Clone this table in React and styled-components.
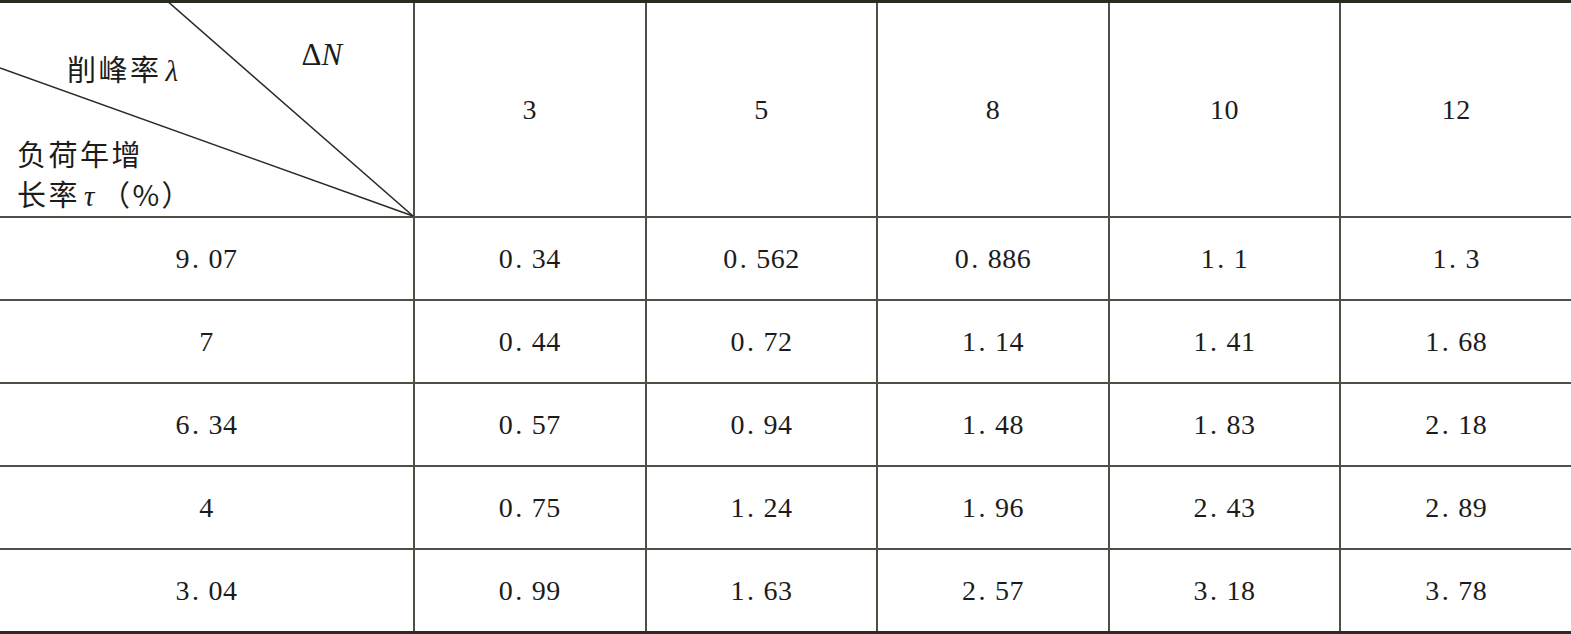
import React from "react";
import styled, { createGlobalStyle } from "styled-components";

const Global = createGlobalStyle`
  html, body { margin: 0; padding: 0; background: #ffffff; }
  body { font-family: "Liberation Serif", "Noto Sans CJK SC", serif; color: #1c1c1c; }
`;

const Table = styled.div`
  display: grid;
  grid-template-columns: 413px repeat(5, 1fr);
  grid-template-rows: 213px repeat(5, 81px);
  gap: 2px;
  width: 1571px;
  background: #4f4f46;
  border-top: 3px solid #2c2b1f;
  border-bottom: 3px solid #2c2b1f;
`;

const Cell = styled.div`
  background: #ffffff;
  display: flex;
  align-items: center;
  justify-content: center;
  font-family: "Liberation Serif", serif;
  font-size: 28px;
  color: #1c1c1c;
  letter-spacing: 0.5px;
`;

const Dot = styled.span`
  margin-left: 2px;
  margin-right: 9px;
`;

const Corner = styled.div`
  background: #ffffff;
  position: relative;
  overflow: visible;
`;

const Diagonals = styled.svg`
  position: absolute;
  left: 0;
  top: -3px;
  width: 413px;
  height: 216px;
  overflow: visible;
`;

const CornerContent = styled.div`
  display: flex;
  flex-direction: column;
  height: 100%;
`;

const TopLabels = styled.div`
  display: flex;
  align-items: flex-start;
  padding-top: 37px;
`;

const RowLabel = styled.div`
  font-family: "Noto Sans CJK SC", serif;
  font-size: 29px;
  letter-spacing: 2.5px;
  line-height: 40px;
  color: #1c1c1c;
  margin-left: ${(p) => p.$left}px;
  margin-top: ${(p) => p.$top || 0}px;
`;

const ColLabel = styled.div`
  font-family: "Liberation Serif", serif;
  font-size: 31px;
  line-height: 30px;
  margin-left: 117px;
  margin-top: 0px;
  color: #1c1c1c;
`;

const Ital = styled.i`
  font-family: "Liberation Serif", serif;
  font-style: italic;
  margin-left: ${(p) => p.$ml ?? 4}px;
  margin-right: ${(p) => p.$mr ?? 4}px;
`;

const header = ["3", "5", "8", "10", "12"];
const rows = [
  ["9.07", "0.34", "0.562", "0.886", "1.1", "1.3"],
  ["7", "0.44", "0.72", "1.14", "1.41", "1.68"],
  ["6.34", "0.57", "0.94", "1.48", "1.83", "2.18"],
  ["4", "0.75", "1.24", "1.96", "2.43", "2.89"],
  ["3.04", "0.99", "1.63", "2.57", "3.18", "3.78"],
];

function Num({ value }) {
  const [a, b] = value.split(".");
  if (b === undefined) return <>{a}</>;
  return (
    <>
      {a}
      <Dot>.</Dot>
      {b}
    </>
  );
}

export default function App() {
  return (
    <>
      <Global />
      <Table>
        <Corner>
          <Diagonals viewBox="0 0 413 216">
            <line x1="166" y1="0" x2="413" y2="216" stroke="#2a2a22" strokeWidth="1.6" />
            <line x1="0" y1="68" x2="413" y2="216" stroke="#2a2a22" strokeWidth="1.6" />
          </Diagonals>
          <CornerContent>
            <TopLabels>
              <RowLabel $left={67} $top={8}>
                削峰率<Ital>λ</Ital>
              </RowLabel>
              <ColLabel>
                Δ<Ital $ml={0} $mr={0}>N</Ital>
              </ColLabel>
            </TopLabels>
            <RowLabel $left={17} $top={42}>
              负荷年增
              <br />
              长率<Ital>τ</Ital>（%）
            </RowLabel>
          </CornerContent>
        </Corner>
        {header.map((h) => (
          <Cell key={h}>{h}</Cell>
        ))}
        {rows.map((r, i) =>
          r.map((v, j) => (
            <Cell key={`${i}-${j}`}>
              <Num value={v} />
            </Cell>
          ))
        )}
      </Table>
    </>
  );
}
